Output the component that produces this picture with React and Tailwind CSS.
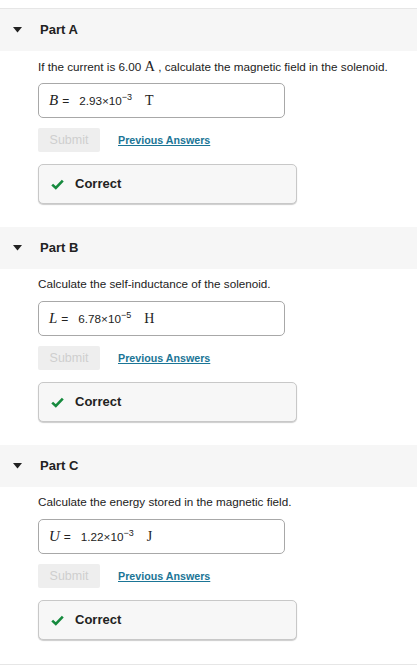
const parts = [
  {
    id: "A",
    question: (
      <>
        If the current is 6.00{" "}
        <span className="font-['Liberation_Serif',serif] text-[14.5px]">A</span>{" "}
        , calculate the magnetic field in the solenoid.
      </>
    ),
    symbol: "B",
    mantissa: "2.93",
    exp: "−3",
    unit: "T",
  },
  {
    id: "B",
    question: "Calculate the self-inductance of the solenoid.",
    symbol: "L",
    mantissa: "6.78",
    exp: "−5",
    unit: "H",
  },
  {
    id: "C",
    question: "Calculate the energy stored in the magnetic field.",
    symbol: "U",
    mantissa: "1.22",
    exp: "−3",
    unit: "J",
  },
];

function Check() {
  return (
    <svg width="13" height="11" viewBox="0 0 13 11" className="shrink-0">
      <path
        d="M1.2 5.6 L4.8 9 L11.8 1.6"
        fill="none"
        stroke="#168a3e"
        strokeWidth="2.6"
        strokeLinejoin="miter"
      />
    </svg>
  );
}

function Part({ part, first }) {
  return (
    <section className={first ? "" : "mt-[23px]"}>
      <div className="h-[42px] bg-[#f6f6f6] flex items-center pl-[13px]">
        <svg width="9" height="6" viewBox="0 0 9 6" className="mr-[18px]">
          <path d="M0 0 L9 0 L4.5 5.5 Z" fill="#222" />
        </svg>
        <h2 className="text-[13px] font-bold text-[#222]">Part {part.id}</h2>
      </div>

      <div className="pl-[38px]">
        <p className="mt-[7px] text-[11.7px] leading-[16px] text-[#222] h-[17px]">
          {part.question}
        </p>

        <div className="mt-[8px] w-[247px] h-[35px] border border-[#a8a8a8] rounded-[5px] bg-white flex items-center pl-[10px] text-[#222]">
          <span className="font-['Liberation_Serif',serif] italic text-[15px]">
            {part.symbol}
          </span>
          <span className="text-[12px] ml-[4px]">=</span>
          <span className="text-[11.7px] ml-[10px]">
            {part.mantissa}×10
            <sup className="text-[9px] -top-[5px]">{part.exp}</sup>
          </span>
          <span className="font-['Liberation_Serif',serif] text-[14px] ml-[13px]">
            {part.unit}
          </span>
        </div>

        <div className="mt-[10px] flex items-center">
          <button
            type="button"
            disabled
            className="w-[62px] h-[24px] bg-[#eeeeee] text-[#cfcfcf] text-[12.5px] rounded-[2px]"
          >
            Submit
          </button>
          <a
            href="#"
            className="ml-[18px] text-[10.7px] font-bold text-[#1b7596] underline"
          >
            Previous Answers
          </a>
        </div>

        <div className="mt-[12px] w-[259px] h-[40px] border border-[#c8c8c8] rounded-[5px] bg-[#f7f7f7] shadow-[0_1px_1px_rgba(0,0,0,0.2)] flex items-center pl-[12px]">
          <Check />
          <span className="ml-[11px] text-[13px] font-bold text-[#222]">
            Correct
          </span>
        </div>
      </div>
    </section>
  );
}

export default function App() {
  return (
    <div className="w-[417px] h-[665px] bg-white font-['Liberation_Sans',Arial,sans-serif] pt-[8px]">
      <div className="border-t border-b border-[#e6e6e6] h-[657px]">
        {parts.map((p, i) => (
          <Part key={p.id} part={p} first={i === 0} />
        ))}
      </div>
    </div>
  );
}
